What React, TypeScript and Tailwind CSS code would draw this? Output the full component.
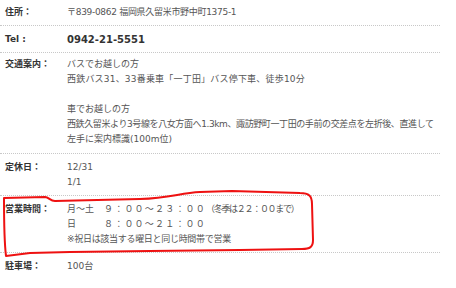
import React from "react";

type Row = { label: string; body: React.ReactNode; cls?: string };

const font = { fontFamily: '"DejaVu Sans", "Noto Sans CJK JP", sans-serif' };

function Hours() {
  return (
    <div>
      <div className="flex">
        <span className="w-[37px] shrink-0">月～土</span>
        <span className="tracking-[1.2px]">９：００～２３：００</span>
        <span className="tracking-[-1.3px]">（冬季は２２：００まで）</span>
      </div>
      <div className="flex">
        <span className="w-[37px] shrink-0">日</span>
        <span className="tracking-[1.2px]">８：００～２１：００</span>
      </div>
      <div className="tracking-[-0.3px]">※祝日は該当する曜日と同じ時間帯で営業</div>
    </div>
  );
}

const rows: Row[] = [
  {
    label: "住所：",
    body: <div className="tracking-[-0.3px]">〒839-0862 福岡県久留米市野中町1375-1</div>,
    cls: "pt-[5px] pb-[5px]",
  },
  {
    label: "Tel :",
    body: <div className="text-[10px] font-bold text-[#333]">0942-21-5551</div>,
    cls: "pt-[6px] pb-[5px]",
  },
  {
    label: "交通案内：",
    body: (
      <div>
        <div>バスでお越しの方</div>
        <div className="tracking-[0.2px]">西鉄バス31、33番乗車「一丁田」バス停下車、徒歩10分</div>
        <div>&nbsp;</div>
        <div>車でお越しの方</div>
        <div className="tracking-[-0.4px]">
          西鉄久留米より3号線を八女方面へ1.3km、諏訪野町一丁田の手前の交差点を左折後、直進して
        </div>
        <div>左手に案内標識(100m位)</div>
      </div>
    ),
    cls: "pt-[4px] pb-[6px]",
  },
  {
    label: "定休日：",
    body: (
      <div>
        <div>12/31</div>
        <div>1/1</div>
      </div>
    ),
    cls: "pt-[6px] pb-[5px]",
  },
  { label: "営業時間：", body: <Hours />, cls: "pt-[6px] pb-[5px]" },
  { label: "駐車場：", body: <div>100台</div>, cls: "pt-[6px] pb-[5px]" },
];

export default function App() {
  return (
    <div className="relative w-[456px] h-[288px] overflow-hidden bg-white" style={font}>
      <div className="w-[440px] whitespace-nowrap text-[9px] leading-[15px] text-[#555]">
        {rows.map((r, i) => (
          <div
            key={r.label}
            className={`flex items-start ${r.cls ?? ""} ${
              i < rows.length - 1 ? "border-b border-dotted border-[#c8c8c8]" : ""
            }`}
          >
            <div className="w-[67px] shrink-0 pl-[5px] font-bold text-[#333]">{r.label}</div>
            <div className="flex-1">{r.body}</div>
          </div>
        ))}
      </div>

      {/* hand-drawn highlight around the opening hours */}
      <svg className="absolute left-0 top-0 pointer-events-none" width="456" height="288" viewBox="0 0 456 288">
        <path
          d="M4 198 L45 197 C49 197 50 201 55 201 L140 199 C170 198 180 193 200 192 L232 191 L300 193 C309 193 312 196 312 204 L313 240 C313 247 310 249 302 249 L240 250 L150 251 L70 252 L30 253 L6 256 C4 240 4 215 4 198 Z"
          fill="none"
          stroke="#ee1111"
          strokeWidth="2"
          strokeLinejoin="round"
          strokeLinecap="round"
        />
      </svg>
    </div>
  );
}
